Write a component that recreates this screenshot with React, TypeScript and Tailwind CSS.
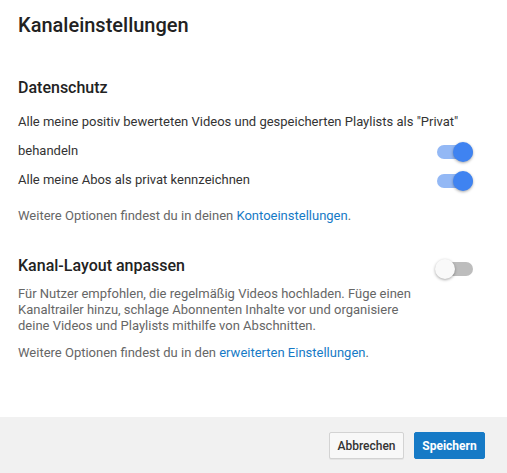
import React from 'react';

const Toggle: React.FC<{ on: boolean }> = ({ on }) => {
    return (
        <div className="relative w-[36px] h-[20px] shrink-0">
            {/* track */}
            <div className={`absolute top-[3px] left-0 right-0 h-[14px] rounded-full ${on ? 'bg-[#93b8f5]' : 'bg-[#bdbdbd]'}`} />
            {/* knob */}
            <div
                className={`absolute top-0 w-[20px] h-[20px] rounded-full shadow-[0_1px_3px_rgba(0,0,0,0.35)] ${on ? 'right-0 bg-[#3f83f1]' : 'left-[-2px] bg-[#f9f9f9]'}`}
            />
        </div>
    );
};

const App: React.FC = () => {
    return (
        <div className="w-[507px] h-[473px] flex flex-col bg-white text-[#333] font-['Roboto','Liberation_Sans',sans-serif] overflow-hidden">
            {/* Header */}
            <div className="px-[18px] pt-[12px]">
                <h1 className="text-[20px] leading-[26px] font-medium text-[#222]">Kanaleinstellungen</h1>
            </div>

            {/* Datenschutz */}
            <section className="pl-[18px] pr-[34px] mt-[40px]">
                <h2 className="text-[16px] leading-[20px] font-medium text-[#222]">Datenschutz</h2>
                <div className="mt-[9px] text-[13px] leading-[29px]">
                    <div>Alle meine positiv bewerteten Videos und gespeicherten Playlists als "Privat"</div>
                    <div className="flex items-center justify-between">
                        <span>behandeln</span>
                        <div className="mt-[2px]"><Toggle on={true} /></div>
                    </div>
                    <div className="flex items-center justify-between">
                        <span>Alle meine Abos als privat kennzeichnen</span>
                        <div className="mt-[2px]"><Toggle on={true} /></div>
                    </div>
                </div>
                <p className="mt-[12px] text-[13px] leading-[20px] text-[#666]">
                    Weitere Optionen findest du in deinen <a href="#" className="text-[#167ac6]">Kontoeinstellungen</a>.
                </p>
            </section>

            {/* Kanal-Layout */}
            <section className="pl-[18px] pr-[34px] mt-[30px]">
                <div className="flex items-start justify-between">
                    <h2 className="text-[16px] leading-[20px] font-medium text-[#222]">Kanal-Layout anpassen</h2>
                    <div className="mt-[3px]"><Toggle on={false} /></div>
                </div>
                <p className="mt-[7px] w-[405px] text-[13px] leading-[16px] text-[#666]">
                    Für Nutzer empfohlen, die regelmäßig Videos hochladen. Füge einen Kanaltrailer hinzu, schlage Abonnenten Inhalte vor und organisiere deine Videos und Playlists mithilfe von Abschnitten.
                </p>
                <p className="mt-[9px] text-[13px] leading-[20px] text-[#666]">
                    Weitere Optionen findest du in den <a href="#" className="text-[#167ac6]">erweiterten Einstellungen</a>.
                </p>
            </section>

            {/* Footer */}
            <footer className="mt-auto h-[56px] bg-[#f1f1f1] flex justify-end items-start pt-[15px] pr-[22px] gap-[10px]">
                <button className="h-[27px] w-[75px] bg-[#f8f8f8] border border-[#d3d3d3] rounded-[2px] text-[12px] font-medium text-[#333] shadow-[0_1px_0_rgba(0,0,0,0.05)]">
                    Abbrechen
                </button>
                <button className="h-[27px] w-[71px] bg-[#167ac6] border border-[#167ac6] rounded-[2px] text-[12px] font-bold text-white">
                    Speichern
                </button>
            </footer>
        </div>
    );
};

export default App;
